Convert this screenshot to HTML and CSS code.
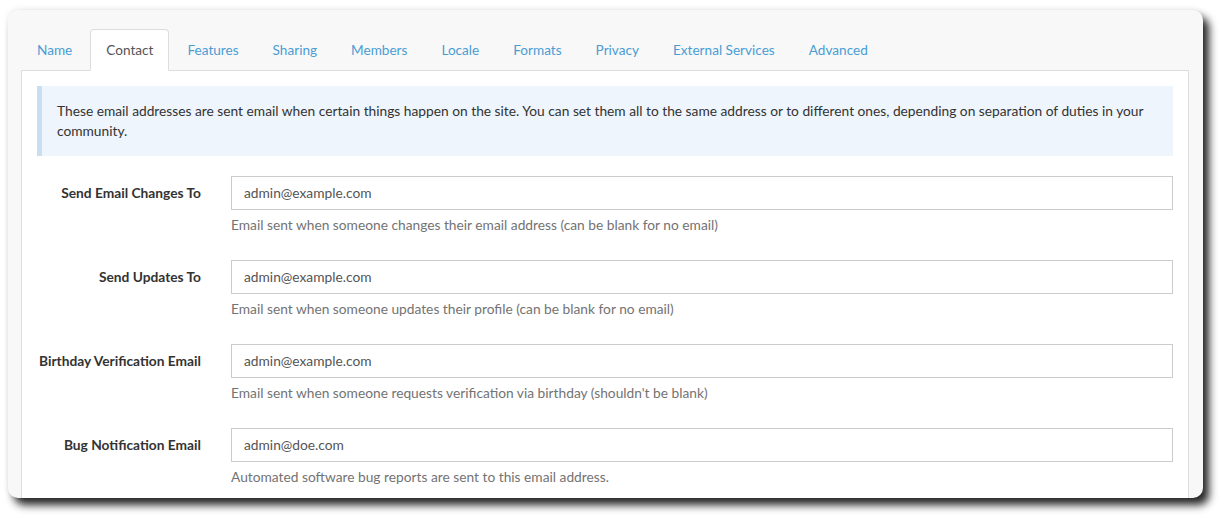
FILE: index.html
```html
<!DOCTYPE html>
<html>
<head>
<meta charset="utf-8">
<link rel="stylesheet" href="styles.css">
</head>
<body>
<div class="card">
  <ul class="tabs">
    <li class="tab"><a>Name</a></li>
    <li class="tab active"><a>Contact</a></li>
    <li class="tab"><a>Features</a></li>
    <li class="tab"><a>Sharing</a></li>
    <li class="tab"><a>Members</a></li>
    <li class="tab"><a>Locale</a></li>
    <li class="tab"><a>Formats</a></li>
    <li class="tab"><a>Privacy</a></li>
    <li class="tab"><a>External Services</a></li>
    <li class="tab"><a>Advanced</a></li>
  </ul>
  <div class="panel">
    <div class="alert">These email addresses are sent email when certain things happen on the site. You can set them all to the same address or to different ones, depending on separation of duties in your community.</div>
    <div class="group">
      <label class="label">Send Email Changes To</label>
      <div class="field">
        <div class="input">admin@example.com</div>
        <div class="help">Email sent when someone changes their email address (can be blank for no email)</div>
      </div>
    </div>
    <div class="group">
      <label class="label">Send Updates To</label>
      <div class="field">
        <div class="input">admin@example.com</div>
        <div class="help">Email sent when someone updates their profile (can be blank for no email)</div>
      </div>
    </div>
    <div class="group">
      <label class="label">Birthday Verification Email</label>
      <div class="field">
        <div class="input">admin@example.com</div>
        <div class="help">Email sent when someone requests verification via birthday (shouldn't be blank)</div>
      </div>
    </div>
    <div class="group">
      <label class="label">Bug Notification Email</label>
      <div class="field">
        <div class="input">admin@doe.com</div>
        <div class="help">Automated software bug reports are sent to this email address.</div>
      </div>
    </div>
  </div>
</div>
</body>
</html>
```

FILE: styles.css
```css
html, body {
  margin: 0;
  padding: 0;
  background: #ffffff;
}
body {
  padding: 10px 24px 24px 8px;
  font-family: Lato, "Liberation Sans", sans-serif;
  font-size: 13.75px;
  line-height: 20px;
  color: #333333;
  overflow: hidden;
  height: 522px;
  box-sizing: border-box;
}
.card {
  width: 1195px;
  height: 488px;
  box-sizing: border-box;
  background: #f8f8f8;
  border-radius: 10px;
  overflow: hidden;
  padding: 19px 14px 0 13px;
  box-shadow: 0 -1px 6px rgba(0,0,0,0.07), 6px 7px 8px rgba(0,0,0,0.85);
}
.tabs {
  list-style: none;
  margin: 0;
  padding: 0;
  display: flex;
  border-bottom: 1px solid #dddddd;
  font-size: 13.6px;
}
.tab {
  margin-right: 2px;
  margin-bottom: -1px;
}
.tab a {
  display: block;
  padding: 10px 15px;
  border: 1px solid transparent;
  border-radius: 4px 4px 0 0;
  color: #4a9dd4;
}
.tab.active a {
  background: #ffffff;
  border-color: #dddddd;
  border-bottom-color: transparent;
  color: #555555;
}
.panel {
  background: #ffffff;
  border: 1px solid #dddddd;
  border-top: none;
  padding: 15px;
  height: 600px;
}
.alert {
  background: #eef5fc;
  border-left: 5px solid #c9deef;
  padding: 15px;
  margin-bottom: 20px;
  color: #333333;
}
.group {
  display: grid;
  grid-template-columns: 164px 1fr;
  column-gap: 30px;
  margin-bottom: 15px;
}
.label {
  font-weight: bold;
  text-align: right;
  white-space: nowrap;
  padding-top: 7px;
  color: #333333;
}
.input {
  height: 34px;
  box-sizing: border-box;
  border: 1px solid #cccccc;
  padding: 6px 12px;
  color: #555555;
}
.help {
  margin-top: 5px;
  margin-bottom: 10px;
  color: #737373;
}
```
